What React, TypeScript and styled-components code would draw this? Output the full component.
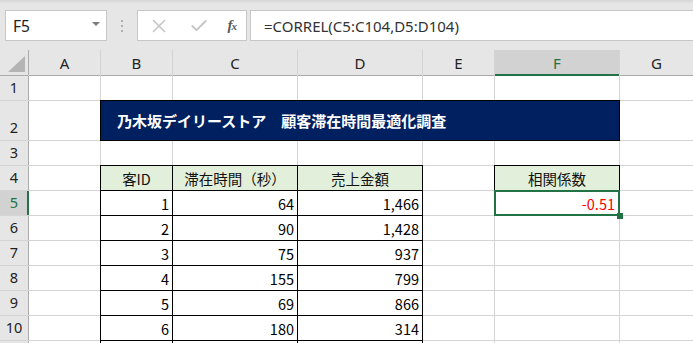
import React from "react";
import styled, { createGlobalStyle } from "styled-components";
import { X, Check } from "lucide-react";

const GREEN = "#217346";

const GlobalStyle = createGlobalStyle`
  * { box-sizing: border-box; }
  html, body {
    margin: 0;
    padding: 0;
    overflow: hidden;
    background: #e6e6e6;
  }
`;

const columns = ["A", "B", "C", "D", "E", "F", "G"];

const tableRows = [
  ["1", "64", "1,466"],
  ["2", "90", "1,428"],
  ["3", "75", "937"],
  ["4", "155", "799"],
  ["5", "69", "866"],
  ["6", "180", "314"],
];

const App = () => {
  return (
    <Page>
      <GlobalStyle />
      <TopStrip />
      <FormulaBar>
        <NameBox>
          <span>F5</span>
          <DropArrow />
        </NameBox>
        <Grip>
          <svg width="4" height="12" viewBox="0 0 4 12">
            <rect x="1" y="0" width="2" height="2" fill="#b0b0b0" />
            <rect x="1" y="5" width="2" height="2" fill="#b0b0b0" />
            <rect x="1" y="10" width="2" height="2" fill="#b0b0b0" />
          </svg>
        </Grip>
        <ButtonBox>
          <X size={22} color="#c4c4c4" strokeWidth={1.6} />
          <Check size={20} color="#c4c4c4" strokeWidth={2.2} />
          <Fx>
            f<small>x</small>
          </Fx>
        </ButtonBox>
        <FormulaInput>=CORREL(C5:C104,D5:D104)</FormulaInput>
      </FormulaBar>

      <Sheet>
        <Corner>
          <svg width="28" height="25" viewBox="0 0 28 25">
            <polygon points="8,22 25,22 25,6" fill="#b4b4b4" />
          </svg>
        </Corner>
        {columns.map((c) => (
          <ColHead key={c} $active={c === "F"}>
            {c}
          </ColHead>
        ))}

        {/* row 1 */}
        <RowHead>1</RowHead>
        {columns.map((c) => (
          <Cell key={"r1" + c} />
        ))}

        {/* row 2 : title */}
        <RowHead>2</RowHead>
        <Cell />
        <TitleCell>乃木坂デイリーストア　顧客滞在時間最適化調査</TitleCell>
        <Cell />

        {/* row 3 */}
        <RowHead>3</RowHead>
        {columns.map((c) => (
          <Cell key={"r3" + c} />
        ))}

        {/* row 4 : headers */}
        <RowHead>4</RowHead>
        <Cell />
        <HeadCell>客ID</HeadCell>
        <HeadCell>滞在時間（秒）</HeadCell>
        <HeadCell>売上金額</HeadCell>
        <Cell />
        <HeadCell>相関係数</HeadCell>
        <Cell />

        {tableRows.map((r, i) => (
          <React.Fragment key={i}>
            <RowHead $active={i === 0}>{i + 5}</RowHead>
            <Cell />
            {r.map((v, j) => (
              <Cell key={j} $boxed>
                {v}
              </Cell>
            ))}
            <Cell />
            {i === 0 ? (
              <SelectedCell>
                -0.51
                <FillHandle />
              </SelectedCell>
            ) : (
              <Cell />
            )}
            <Cell />
          </React.Fragment>
        ))}

        {/* row 11, only its top edge is in view */}
        <RowHead />
        <Cell />
        <Cell $boxed />
        <Cell $boxed />
        <Cell $boxed />
        <Cell />
        <Cell />
        <Cell />
      </Sheet>
    </Page>
  );
};

export default App;

const Page = styled.div`
  width: 693px;
  height: 343px;
  overflow: hidden;
  background: #e6e6e6;
`;

const TopStrip = styled.div`
  height: 3px;
  background: linear-gradient(#d6d6d6, #e2e2e2);
`;

const FormulaBar = styled.div`
  display: flex;
  align-items: stretch;
  height: 31px;
  margin-top: 7px;
  padding-left: 5px;
  margin-right: -2px;
  font-family: "Noto Sans", "Liberation Sans", sans-serif;
`;

const NameBox = styled.div`
  width: 102px;
  display: flex;
  align-items: center;
  justify-content: space-between;
  padding: 0 6px 0 7px;
  background: #fff;
  border: 1px solid #c6c6c6;
  font-size: 15.5px;
  color: #222;
`;

const DropArrow = styled.div`
  width: 0;
  height: 0;
  border-left: 4px solid transparent;
  border-right: 4px solid transparent;
  border-top: 4px solid #7a7a7a;
  margin-bottom: 3px;
`;

const Grip = styled.div`
  width: 30px;
  display: flex;
  align-items: center;
  justify-content: center;
`;

const ButtonBox = styled.div`
  width: 110px;
  display: flex;
  align-items: center;
  justify-content: space-between;
  padding: 0 10px 0 10px;
  background: #fff;
  border: 1px solid #c6c6c6;
  margin-right: 3px;
`;

const Fx = styled.span`
  font-family: "Liberation Serif", "DejaVu Serif", serif;
  font-style: italic;
  font-weight: bold;
  font-size: 15px;
  color: #5a5a5a;
  letter-spacing: -1px;

  small {
    font-size: 11px;
  }
`;

const FormulaInput = styled.div`
  flex: 1;
  display: flex;
  align-items: center;
  padding-left: 13px;
  background: #fff;
  border: 1px solid #c6c6c6;
  font-size: 15px;
  color: #333;
`;

const Sheet = styled.div`
  margin-top: 9px;
  display: grid;
  grid-template-columns: 28px 71px 71px 124px 124px 71px 124px 73px;
  grid-template-rows: 25px 24px 39px repeat(9, 24px);
  gap: 1px;
  background: #d4d4d4;
  font-family: "Noto Sans CJK JP", "Noto Sans", sans-serif;
`;

const Corner = styled.div`
  background: #e6e6e6;
  box-shadow: 1px 0 0 #ababab, 0 1px 0 #ababab;
  display: flex;
`;

const ColHead = styled.div<{ $active?: boolean }>`
  display: flex;
  align-items: center;
  justify-content: center;
  background: ${(p) => (p.$active ? "#d2d2d2" : "#e6e6e6")};
  color: ${(p) => (p.$active ? GREEN : "#222")};
  box-shadow: ${(p) =>
    p.$active
      ? `inset 0 -1px 0 ${GREEN}, 0 1px 0 ${GREEN}`
      : "0 1px 0 #ababab"};
  font-family: "Noto Sans", "Liberation Sans", sans-serif;
  font-size: 15px;
`;

const RowHead = styled.div<{ $active?: boolean }>`
  display: flex;
  align-items: flex-end;
  justify-content: center;
  padding-bottom: 3px;
  background: ${(p) => (p.$active ? "#d2d2d2" : "#e6e6e6")};
  color: ${(p) => (p.$active ? GREEN : "#222")};
  box-shadow: ${(p) =>
    p.$active
      ? `inset -1px 0 0 ${GREEN}, 1px 0 0 ${GREEN}`
      : "1px 0 0 #ababab"};
  font-family: "Noto Sans", "Liberation Sans", sans-serif;
  font-size: 14.5px;
`;

const Cell = styled.div<{ $boxed?: boolean }>`
  display: flex;
  align-items: center;
  justify-content: flex-end;
  padding-right: 3px;
  background: #fff;
  color: #000;
  font-size: 14.5px;
  box-shadow: ${(p) => (p.$boxed ? "0 0 0 1px #000" : "none")};
`;

const HeadCell = styled(Cell)`
  justify-content: center;
  padding-right: 0;
  background: #e2efda;
  box-shadow: 0 0 0 1px #000;
  color: #111;
`;

const TitleCell = styled.div`
  grid-column: 3 / 8;
  display: flex;
  align-items: center;
  padding-left: 16px;
  background: #002060;
  color: #fff;
  font-weight: bold;
  font-size: 15px;
  box-shadow: 0 0 0 1px #000;
`;

const SelectedCell = styled(Cell)`
  position: relative;
  z-index: 2;
  color: #ff0000;
  padding-right: 4px;
  box-shadow: 0 0 0 1px ${GREEN}, inset 0 0 0 1px ${GREEN};
`;

const FillHandle = styled.div`
  position: absolute;
  right: -4px;
  bottom: -4px;
  width: 6px;
  height: 6px;
  background: ${GREEN};
`;
